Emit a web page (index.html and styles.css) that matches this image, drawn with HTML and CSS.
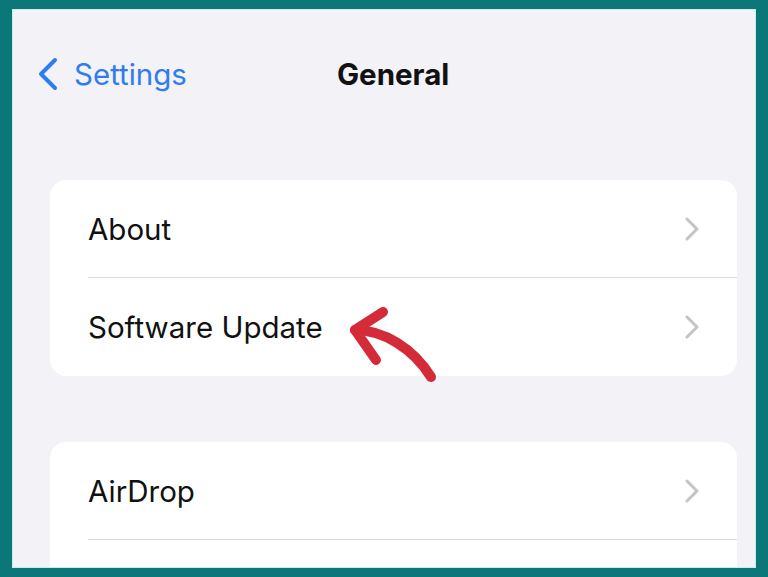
FILE: index.html
```html
<!DOCTYPE html>
<html>
<head>
<meta charset="utf-8">
<title>General</title>
<link rel="stylesheet" href="styles.css">
</head>
<body>
  <div class="frame">
    <header class="navbar">
      <a class="back" href="#">
        <svg class="back-icon" width="22" height="34" viewBox="0 0 22 34">
          <path d="M18 3 L4 17 L18 31" fill="none" stroke="#2f7cf0" stroke-width="4" stroke-linecap="round" stroke-linejoin="round"/>
        </svg>
        <span>Settings</span>
      </a>
      <h1 class="title">General</h1>
    </header>

    <section class="group">
      <div class="row">
        <span class="label">About</span>
        <svg class="chev" width="14" height="24" viewBox="0 0 14 24"><path d="M2 2 L12 12 L2 22" fill="none" stroke="#c4c4c8" stroke-width="3" stroke-linecap="round" stroke-linejoin="round"/></svg>
      </div>
      <div class="row">
        <span class="label">Software Update</span>
        <svg class="chev" width="14" height="24" viewBox="0 0 14 24"><path d="M2 2 L12 12 L2 22" fill="none" stroke="#c4c4c8" stroke-width="3" stroke-linecap="round" stroke-linejoin="round"/></svg>
        <svg class="pointer" width="100" height="90" viewBox="0 0 100 90">
          <path d="M40 12 L12 30 L33 60" fill="none" stroke="#d52b38" stroke-width="10" stroke-linecap="round" stroke-linejoin="round"/>
          <path d="M12 30 C40 30 70 48 88 77" fill="none" stroke="#d52b38" stroke-width="10" stroke-linecap="round"/>
        </svg>
      </div>
    </section>

    <section class="group">
      <div class="row">
        <span class="label">AirDrop</span>
        <svg class="chev" width="14" height="24" viewBox="0 0 14 24"><path d="M2 2 L12 12 L2 22" fill="none" stroke="#c4c4c8" stroke-width="3" stroke-linecap="round" stroke-linejoin="round"/></svg>
      </div>
      <div class="row"></div>
    </section>
  </div>
</body>
</html>
```

FILE: styles.css
```css
body {
    margin: 0;
    background-color: #0b7778;
    font-family: Inter, "Liberation Sans", sans-serif;
}
.frame {
    margin: 10px 13px;
    height: 557px;
    background-color: #f2f2f7;
    box-shadow: 0 0 0 1px #c9ecec;
    overflow: hidden;
}

/* top bar */
.navbar {
    display: flex;
    align-items: center;
    height: 128px;
    padding-left: 24px;
    box-sizing: border-box;
}
.back {
    display: flex;
    align-items: center;
    gap: 15px;
    color: #2f7cf0;
    text-decoration: none;
    font-size: 29.5px;
    margin-top: -1px;
}
.back-icon {
    display: block;
}
.title {
    margin: 0 0 0 150px;
    font-size: 29.5px;
    font-weight: 700;
    color: #111;
}

/* grouped list */
.group {
    margin: 42px 18px 66px 37px;
    background-color: #fff;
    border-radius: 16px;
}
.group + .group {
    margin-top: 0;
}
.row {
    position: relative;
    display: flex;
    align-items: center;
    justify-content: space-between;
    height: 98px;
    margin-left: 38px;
    padding-right: 38px;
    border-bottom: 1px solid #dcdce0;
    box-sizing: border-box;
}
.row:last-child {
    border-bottom: none;
}
.label {
    font-size: 29.5px;
    color: #111;
}
.chev {
    display: block;
}
.pointer {
    position: absolute;
    left: 255px;
    top: 22px;
}
```
